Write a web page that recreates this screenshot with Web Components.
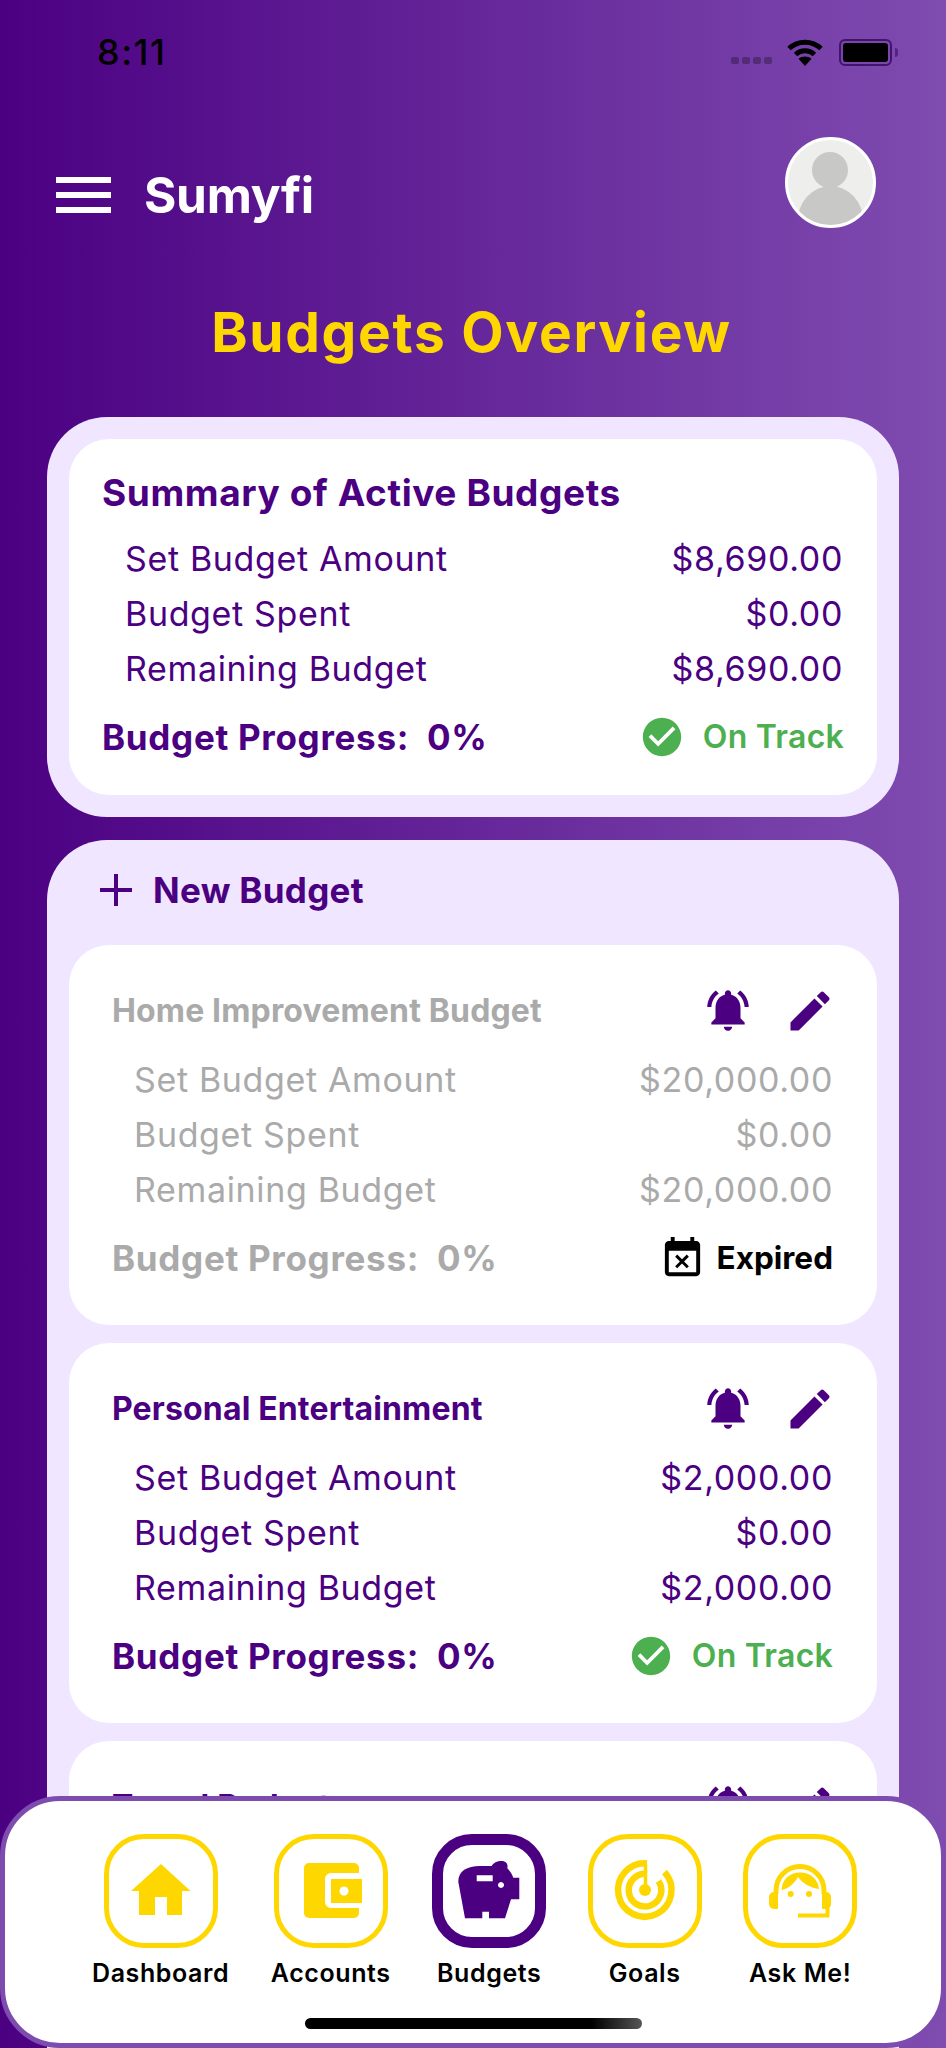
<!DOCTYPE html>
<html lang="en">
<head>
<meta charset="utf-8">
<title>Sumyfi</title>
<style>
  html, body { margin: 0; padding: 0; }
  body { font-family: Inter, "Liberation Sans", sans-serif; }
</style>
</head>
<body>
<app-shell>
  <status-bar></status-bar>
  <app-header name="Sumyfi"></app-header>
  <page-title>Budgets Overview</page-title>

  <summary-panel>
    <budget-card kind="summary" name="Summary of Active Budgets" set="$8,690.00" spent="$0.00" remaining="$8,690.00" progress="0%" status="track"></budget-card>
  </summary-panel>

  <budgets-panel>
    <budget-card kind="expired" name="Home Improvement Budget" set="$20,000.00" spent="$0.00" remaining="$20,000.00" progress="0%" status="expired"></budget-card>
    <budget-card name="Personal Entertainment" set="$2,000.00" spent="$0.00" remaining="$2,000.00" progress="0%" status="track"></budget-card>
    <budget-card name="Travel Budget" header-only></budget-card>
  </budgets-panel>

  <tab-bar>
    <tab-item icon="home" label="Dashboard"></tab-item>
    <tab-item icon="wallet" label="Accounts"></tab-item>
    <tab-item icon="piggy" label="Budgets" active></tab-item>
    <tab-item icon="goal" label="Goals"></tab-item>
    <tab-item icon="agent" label="Ask Me!"></tab-item>
  </tab-bar>
</app-shell>

<script>
const ICONS = {
  bell: `<svg viewBox="0 0 24 24" fill="currentColor"><path d="M7.58 4.08L6.15 2.65C3.75 4.48 2.17 7.3 2.03 10.5h2c.15-2.65 1.51-4.97 3.55-6.42zm12.39 6.42h2c-.15-3.2-1.73-6.02-4.12-7.85l-1.42 1.43c2.02 1.45 3.39 3.77 3.54 6.42zM18 11c0-3.07-1.64-5.64-4.5-6.32V4c0-.83-.67-1.5-1.5-1.5s-1.5.67-1.5 1.5v.68C7.63 5.36 6 7.92 6 11v5l-2 2v1h16v-1l-2-2v-5zm-6 11c.14 0 .27-.01.4-.04.65-.14 1.18-.58 1.44-1.18.1-.24.15-.5.15-.78h-4c.01 1.1.9 2 2.01 2z"/></svg>`,
  pencil: `<svg viewBox="0 0 24 24" fill="currentColor"><path d="M3 17.25V21h3.75L17.81 9.94l-3.75-3.75L3 17.25zM20.71 7.04c.39-.39.39-1.02 0-1.41l-2.34-2.34c-.39-.39-1.02-.39-1.41 0l-1.83 1.83 3.75 3.75 1.83-1.83z"/></svg>`,
  calendar: `<svg viewBox="0 0 24 24" fill="currentColor"><path d="M9.31 17l2.44-2.44L14.19 17l1.06-1.06-2.44-2.44 2.44-2.44L14.19 10l-2.44 2.44L9.31 10l-1.06 1.06 2.44 2.44-2.44 2.44L9.31 17zM19 3h-1V1h-2v2H8V1H6v2H5c-1.11 0-1.99.9-1.99 2L3 19c0 1.1.89 2 2 2h14c1.1 0 2-.9 2-2V5c0-1.1-.9-2-2-2zm0 16H5V8h14v11z"/></svg>`,
  check: `<svg viewBox="0 0 24 24" fill="currentColor"><path d="M12 2C6.48 2 2 6.48 2 12s4.48 10 10 10 10-4.48 10-10S17.52 2 12 2zm-2 15l-5-5 1.41-1.41L10 14.17l7.59-7.59L19 8l-9 9z"/></svg>`,
  plus: `<svg viewBox="0 0 32 32" fill="currentColor"><path d="M14 0h4v14h14v4H18v14h-4V18H0v-4h14z"/></svg>`,
  home: `<svg viewBox="0 0 114 114" fill="currentColor"><path d="M57 30 L86.500 57 H78 V81 H63 V63 H51 V81 H35 V57 H27 Z"/></svg>`,
  wallet: `<svg viewBox="0 0 114 114" fill="currentColor"><path fill-rule="evenodd" d="M35 29H80a5 5 0 0 1 5 5V39H57a6 6 0 0 0-6 6V68a6 6 0 0 0 6 6H85v5a5 5 0 0 1-5 5H35a5 5 0 0 1-5-5V34a5 5 0 0 1 5-5Z"/><path fill-rule="evenodd" d="M57 45H88V69H57ZM70 52.500a4.500 4.500 0 1 0 .01 0Z"/></svg>`,
  piggy: `<svg viewBox="0 0 114 114" fill="currentColor"><path fill-rule="evenodd" d="M26.300 47.700C26.300 37 35 32 48 32H59.700C62 27.500 70 25.500 74 28.500C75.500 30 75.800 32 75.300 34.300C78 37 80 40 81.300 43.700H87.300V65.300H79L73 84.300H57V77.700H50.300V84.300H33ZM44.700 41.300V47.300H60.700V41.300ZM69 48a3 3 0 1 0 .01 0Z"/></svg>`,
  goal: `<svg viewBox="0 0 114 114" fill="none" stroke="currentColor" stroke-width="6.500"><path d="M59 29.400A26.700 26.700 0 1 0 76.500 38"/><path d="M59 40A16.300 16.300 0 1 0 70.500 47"/><path d="M57.500 30V56" stroke-width="3.500"/><circle cx="57" cy="56" r="6" fill="currentColor" stroke="none"/></svg>`,
  agent: `<svg viewBox="0 0 114 114" fill="currentColor"><path d="M33 60V56.500A24 24 0 0 1 81 56.500V60" fill="none" stroke="currentColor" stroke-width="5"/><path d="M35 58V75H31A5 5 0 0 1 26 70V63A5 5 0 0 1 31 58ZM79 58V75H83A5 5 0 0 0 88 70V63A5 5 0 0 0 83 58Z"/><path d="M55 81.500H84.500V72" fill="none" stroke="currentColor" stroke-width="4"/><path d="M38.500 56C39 46 46 38.500 57 38.500C68 38.500 75.500 46 76 55C68 54 60 50 55 43C51 50 45 55 38.500 56Z"/><circle cx="47.700" cy="60" r="3"/><circle cx="66" cy="60" r="3"/></svg>`,
  wifi: `<svg viewBox="0 0 36 28" fill="none" stroke="currentColor" stroke-width="5"><path d="M2 10.500C11 2 25 2 34 10.500"/><path d="M8.500 16.500C14 11.500 22 11.500 27.500 16.500"/><path d="M18 28L11.500 20.800C15 17.800 21 17.800 24.500 20.800Z" fill="currentColor" stroke="none"/></svg>`
};

class AppIcon extends HTMLElement {
  connectedCallback() {
    if (this.shadowRoot) return;
    const size = this.getAttribute("size") || 24;
    this.attachShadow({ mode: "open" }).innerHTML = `
      <style>
        :host { display: block; width: ${size}px; height: ${size}px; flex: none; }
        svg { display: block; width: 100%; height: 100%; }
      </style>
      ${ICONS[this.getAttribute("name")] || ""}`;
  }
}

class AppShell extends HTMLElement {
  constructor() {
    super();
    this.attachShadow({ mode: "open" }).innerHTML = `
      <style>
        :host {
          display: block;
          position: relative;
          width: 946px;
          height: 2048px;
          overflow: hidden;
          background: linear-gradient(90deg, #4b0082 0%, #7f4cb0 100%);
        }
      </style>
      <slot></slot>`;
  }
}

class StatusBar extends HTMLElement {
  constructor() {
    super();
    this.attachShadow({ mode: "open" }).innerHTML = `
      <style>
        :host {
          display: flex;
          align-items: center;
          height: 104px;
          padding: 0 48px 0 97px;
          box-sizing: border-box;
          color: #000;
        }
        .time { font: 500 36px/1 Inter, sans-serif; letter-spacing: 1.5px; flex: 1; }
        .dots { display: flex; gap: 3px; margin: 16px 15px 0 0; }
        .dots i { width: 8px; height: 7px; border-radius: 2px; background: rgba(0, 0, 0, 0.28); }
        .batt {
          width: 53px; height: 27px; margin-left: 16px;
          box-sizing: border-box;
          border: 2px solid rgba(40, 0, 80, 0.7);
          border-radius: 6px;
          padding: 2px;
        }
        .batt b { display: block; height: 100%; background: #000; border-radius: 3px; }
        .nub { width: 3px; height: 9px; margin-left: 3px; background: rgba(40, 0, 80, 0.5); border-radius: 0 3px 3px 0; }
      </style>
      <span class="time">8:11</span>
      <span class="dots"><i></i><i></i><i></i><i></i></span>
      <app-icon name="wifi" size="36"></app-icon>
      <span class="batt"><b></b></span><span class="nub"></span>`;
  }
}

class AppHeader extends HTMLElement {
  constructor() {
    super();
    this.attachShadow({ mode: "open" }).innerHTML = `
      <style>
        :host {
          display: flex;
          align-items: center;
          height: 91px;
          margin-top: 33px;
          padding: 0 70px 0 56px;
          color: #fff;
        }
        .menu { display: flex; flex-direction: column; gap: 9px; width: 55px; margin: 24px 33px 0 0; }
        .menu i { height: 6px; background: #fff; }
        .name { flex: 1; margin-top: 24px; font: 700 49.500px/60px Inter, sans-serif; letter-spacing: -0.300px; }
        .avatar {
          width: 91px; height: 91px;
          box-sizing: border-box;
          border: 3px solid #fff;
          border-radius: 50%;
          background: #eeeeec;
          overflow: hidden;
        }
        svg { display: block; width: 100%; height: 100%; }
      </style>
      <span class="menu"><i></i><i></i><i></i></span>
      <span class="name"></span>
      <span class="avatar">
        <svg viewBox="0 0 85 85" fill="#c8c8c6">
          <circle cx="42" cy="30" r="18"/>
          <ellipse cx="42.500" cy="82" rx="33" ry="36"/>
        </svg>
      </span>`;
  }
  connectedCallback() {
    this.shadowRoot.querySelector(".name").textContent = this.getAttribute("name");
  }
}

class PageTitle extends HTMLElement {
  constructor() {
    super();
    this.attachShadow({ mode: "open" }).innerHTML = `
      <style>
        :host {
          display: block;
          margin: 69px 0 50px;
          padding-right: 3px;
          text-align: center;
          color: #ffd700;
          font: 700 55px/70px Inter, sans-serif;
          letter-spacing: 1.700px;
        }
      </style>
      <slot></slot>`;
  }
}

class SummaryPanel extends HTMLElement {
  constructor() {
    super();
    this.attachShadow({ mode: "open" }).innerHTML = `
      <style>
        :host {
          display: block;
          margin: 0 47px 23px;
          padding: 22px;
          border-radius: 60px;
          background: #f0e6ff;
        }
      </style>
      <slot></slot>`;
  }
}

class BudgetsPanel extends HTMLElement {
  constructor() {
    super();
    this.attachShadow({ mode: "open" }).innerHTML = `
      <style>
        :host {
          display: flex;
          flex-direction: column;
          gap: 18px;
          margin: 0 47px;
          padding: 25px 22px 0;
          border-radius: 60px 60px 0 0;
          background: #f0e6ff;
        }
        .add {
          display: flex;
          align-items: center;
          gap: 21px;
          height: 50px;
          margin: 0 0 12px 31px;
          color: #4b0082;
          font: 700 35px/50px Inter, sans-serif;
          letter-spacing: 0.300px;
        }
      </style>
      <div class="add"><app-icon name="plus" size="32"></app-icon><span>New Budget</span></div>
      <slot></slot>`;
  }
}

class BudgetCard extends HTMLElement {
  connectedCallback() {
    if (this.shadowRoot) return;
    const get = (n) => this.getAttribute(n) || "";
    const summary = get("kind") === "summary";
    const headerOnly = this.hasAttribute("header-only");
    const status = get("status") === "expired"
      ? `<span class="status expired"><app-icon name="calendar" size="47"></app-icon>Expired</span>`
      : `<span class="status track"><app-icon name="check" size="46"></app-icon>On Track</span>`;
    const actions = summary ? "" : `
      <span class="actions">
        <app-icon name="bell" size="50"></app-icon>
        <app-icon name="pencil" size="52"></app-icon>
      </span>`;
    const body = headerOnly ? "" : `
      <div class="rows">
        <div class="row"><span>Set Budget Amount</span><span>${get("set")}</span></div>
        <div class="row"><span>Budget Spent</span><span>${get("spent")}</span></div>
        <div class="row"><span>Remaining Budget</span><span>${get("remaining")}</span></div>
      </div>
      <div class="foot">
        <span class="progress">Budget Progress:&nbsp; ${get("progress")}</span>
        ${status}
      </div>`;
    this.attachShadow({ mode: "open" }).innerHTML = `
      <style>
        :host {
          display: block;
          box-sizing: border-box;
          height: 380px;
          padding: 41px 44px 0 43px;
          border-radius: 40px;
          background: #fff;
          color: #4b0082;
          --muted: #aaaaaa;
        }
        :host([kind="summary"]) { height: 356px; padding: 32px 33px 0; }
        .head { display: flex; align-items: center; justify-content: space-between; height: 50px; margin-bottom: 16px; }
        :host([kind="summary"]) .head { height: 44px; margin-bottom: 16px; }
        .name { font: 700 32px/50px Inter, sans-serif; letter-spacing: 0.150px; }
        :host([kind="summary"]) .name { font-size: 37px; line-height: 44px; letter-spacing: 0.600px; }
        .actions { display: flex; gap: 31px; margin-right: -3px; color: #4b0082; }
        .row {
          display: flex;
          justify-content: space-between;
          height: 55px;
          padding-left: 22px;
          font: 400 34px/55px Inter, sans-serif;
          letter-spacing: 0.650px;
        }
        :host([kind="summary"]) .row { padding: 0 1px 0 23px; }
        .foot { display: flex; align-items: center; justify-content: space-between; height: 44px; margin-top: 19px; }
        .progress { font: 700 35px/44px Inter, sans-serif; letter-spacing: 0.700px; }
        .status { display: flex; align-items: center; gap: 18px; font: 600 32px/44px Inter, sans-serif; letter-spacing: 0.250px; }
        .expired { gap: 11px; font-weight: 700; font-size: 31.500px; letter-spacing: 0; color: #000; }
        .track { color: #4caf50; }
        :host([kind="expired"]) .name,
        :host([kind="expired"]) .rows,
        :host([kind="expired"]) .progress { color: var(--muted); }
      </style>
      <div class="head"><span class="name">${get("name")}</span>${actions}</div>
      ${body}`;
  }
}

class TabBar extends HTMLElement {
  constructor() {
    super();
    this.attachShadow({ mode: "open" }).innerHTML = `
      <style>
        :host {
          position: absolute;
          left: 0; right: 0; top: 1796px; bottom: 0;
          box-sizing: border-box;
          display: flex;
          flex-direction: column;
          align-items: center;
          padding-top: 33px;
          border: 5px solid #7e4bae;
          border-radius: 60px;
          background: #fff;
        }
        .tabs { display: flex; gap: 41.500px; align-self: flex-start; padding-left: 87px; }
        .home-bar {
          width: 337px; height: 11px;
          margin-top: 30px;
          border-radius: 6px;
          background: linear-gradient(90deg, #000 85%, #555 100%);
        }
      </style>
      <div class="tabs"><slot></slot></div>
      <div class="home-bar"></div>`;
  }
}

class TabItem extends HTMLElement {
  connectedCallback() {
    if (this.shadowRoot) return;
    this.attachShadow({ mode: "open" }).innerHTML = `
      <style>
        :host {
          display: flex;
          flex-direction: column;
          align-items: center;
          min-width: 114px;
          color: #000;
        }
        .box {
          width: 114px; height: 114px;
          box-sizing: border-box;
          border: 5px solid #ffd700;
          border-radius: 40px;
          color: #ffd700;
        }
        .box app-icon { margin: -5px; }
        :host([active]) .box { border: 11px solid #4b0082; color: #4b0082; }
        :host([active]) .box app-icon { margin: -11px; }
        .label { margin-top: 10px; font: 600 25px/30px Inter, sans-serif; letter-spacing: 0.600px; white-space: nowrap; }
      </style>
      <div class="box"><app-icon name="${this.getAttribute("icon")}" size="114"></app-icon></div>
      <span class="label">${this.getAttribute("label")}</span>`;
  }
}

customElements.define("app-icon", AppIcon);
customElements.define("app-shell", AppShell);
customElements.define("status-bar", StatusBar);
customElements.define("app-header", AppHeader);
customElements.define("page-title", PageTitle);
customElements.define("summary-panel", SummaryPanel);
customElements.define("budgets-panel", BudgetsPanel);
customElements.define("budget-card", BudgetCard);
customElements.define("tab-bar", TabBar);
customElements.define("tab-item", TabItem);
</script>
</body>
</html>
